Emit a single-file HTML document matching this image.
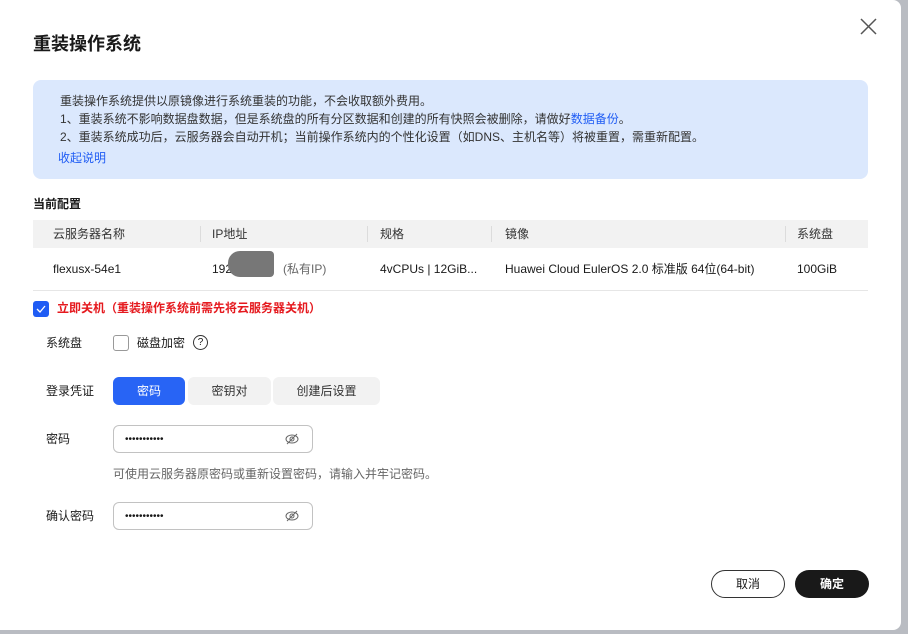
<!DOCTYPE html>
<html><head><meta charset="utf-8"><style>
*{margin:0;padding:0;box-sizing:border-box}
body{width:908px;height:634px;background:#b9bcc2;font-family:"Liberation Sans","Noto Sans CJK SC",sans-serif;font-size:12px;line-height:16px;color:#191919;position:relative;overflow:hidden}
.dlg{position:absolute;left:0;top:0;width:901px;height:630px;background:#fff;border-radius:0 8px 8px 0}
.a{position:absolute;white-space:nowrap}
.info{position:absolute;left:33px;top:80px;width:835px;height:99px;background:#dbe8fd;border-radius:8px}
.th{position:absolute;left:33px;top:220px;width:835px;height:28px;background:#f2f2f2}
.sep{position:absolute;top:226px;width:1px;height:16px;background:#dcdcdc}
.btn{position:absolute;top:377px;height:28px;border-radius:6px;background:#f2f2f2;text-align:center;line-height:28px;color:#333}
.inp{position:absolute;left:113px;width:200px;height:28px;border:1px solid #c2c2c2;border-radius:6px}
</style></head><body>
<div class="dlg">
<div class="a" style="left:33px;top:33px;font-size:18px;line-height:22px;font-weight:bold">重装操作系统</div>
<svg class="a" style="left:860px;top:18px" width="17" height="17"><path d="M1 1L16 16M16 1L1 16" stroke="#555" stroke-width="1.5"/></svg>
<div class="info"></div>
<div class="a" style="left:60px;top:92px;line-height:18px;color:#333">重装操作系统提供以原镜像进行系统重装的功能，不会收取额外费用。<br>1、重装系统不影响数据盘数据，但是系统盘的所有分区数据和创建的所有快照会被删除，请做好<span style="color:#1f5cf4">数据备份</span>。<br>2、重装系统成功后，云服务器会自动开机；当前操作系统内的个性化设置（如DNS、主机名等）将被重置，需重新配置。</div>
<div class="a" style="left:58px;top:150px;color:#1f5cf4">收起说明</div>
<div class="a" style="left:33px;top:196px;font-weight:bold">当前配置</div>
<div class="th"></div>
<div class="sep" style="left:200px"></div><div class="sep" style="left:367px"></div><div class="sep" style="left:491px"></div><div class="sep" style="left:785px"></div>
<div class="a" style="left:53px;top:226px;color:#333">云服务器名称</div>
<div class="a" style="left:212px;top:226px;color:#333">IP地址</div>
<div class="a" style="left:380px;top:226px;color:#333">规格</div>
<div class="a" style="left:505px;top:226px;color:#333">镜像</div>
<div class="a" style="left:797px;top:226px;color:#333">系统盘</div>
<div class="a" style="left:53px;top:261px">flexusx-54e1</div>
<div class="a" style="left:212px;top:261px">192</div>
<div class="a" style="left:228px;top:251px;width:46px;height:26px;background:#777;border-radius:12px 4px 4px 12px"></div>
<div class="a" style="left:283px;top:261px;color:#666">(私有IP)</div>
<div class="a" style="left:380px;top:261px">4vCPUs | 12GiB...</div>
<div class="a" style="left:505px;top:261px">Huawei Cloud EulerOS 2.0 标准版 64位(64-bit)</div>
<div class="a" style="left:797px;top:261px">100GiB</div>
<div class="a" style="left:33px;top:290px;width:835px;height:1px;background:#e6e6e6"></div>
<div class="a" style="left:33px;top:301px;width:16px;height:16px;background:#1f5cf4;border-radius:3px"><svg width="16" height="16"><path d="M4 8l3 3 5-6" stroke="#fff" stroke-width="1.3" fill="none"/></svg></div>
<div class="a" style="left:57px;top:300px;color:#e5191e;font-weight:bold">立即关机（重装操作系统前需先将云服务器关机）</div>
<div class="a" style="left:46px;top:335px">系统盘</div>
<div class="a" style="left:113px;top:335px;width:16px;height:16px;border:1px solid #999;border-radius:3px"></div>
<div class="a" style="left:137px;top:335px">磁盘加密</div>
<div class="a" style="left:193px;top:335px;width:15px;height:15px;border:1px solid #333;border-radius:50%;font-size:10px;text-align:center;line-height:13px">?</div>
<div class="a" style="left:46px;top:383px">登录凭证</div>
<div class="btn" style="left:113px;width:72px;background:#2864f5;color:#fff">密码</div>
<div class="btn" style="left:188px;width:83px">密钥对</div>
<div class="btn" style="left:273px;width:107px">创建后设置</div>
<div class="a" style="left:46px;top:431px">密码</div>
<div class="inp" style="top:425px"></div>
<div class="a" style="left:125px;top:432px;font-size:10px">•••••••••••</div>
<svg class="a" style="left:285px;top:432px" width="14" height="14"><ellipse cx="7" cy="7" rx="6" ry="4" stroke="#666" fill="none"/><circle cx="7" cy="7" r="2" stroke="#666" fill="none"/><path d="M2 12L12 2" stroke="#666"/></svg>
<div class="a" style="left:113px;top:466px;color:#666">可使用云服务器原密码或重新设置密码，请输入并牢记密码。</div>
<div class="a" style="left:46px;top:508px">确认密码</div>
<div class="inp" style="top:502px"></div>
<div class="a" style="left:125px;top:509px;font-size:10px">•••••••••••</div>
<svg class="a" style="left:285px;top:509px" width="14" height="14"><ellipse cx="7" cy="7" rx="6" ry="4" stroke="#666" fill="none"/><circle cx="7" cy="7" r="2" stroke="#666" fill="none"/><path d="M2 12L12 2" stroke="#666"/></svg>
<div class="a" style="left:711px;top:570px;width:74px;height:28px;border:1px solid #333;border-radius:14px;text-align:center;line-height:26px">取消</div>
<div class="a" style="left:795px;top:570px;width:74px;height:28px;background:#191919;color:#fff;border-radius:14px;text-align:center;line-height:28px;font-weight:bold">确定</div>
</div>
</body></html>
